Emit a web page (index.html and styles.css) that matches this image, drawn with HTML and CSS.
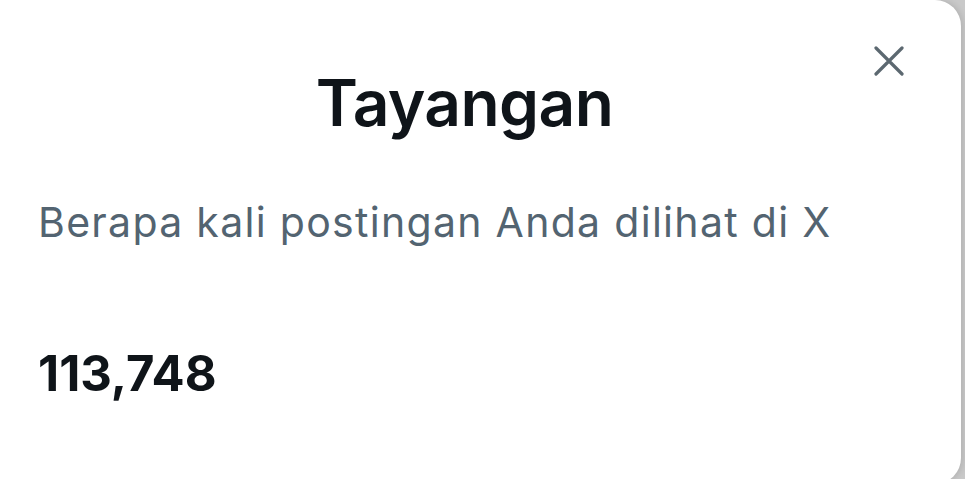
FILE: index.html
```html
<!DOCTYPE html>
<html lang="id">
<head>
<meta charset="utf-8">
<link rel="stylesheet" href="styles.css">
</head>
<body>
<div class="card">
  <div class="header">
    <h1 class="title">Tayangan</h1>
    <button class="close" aria-label="Tutup">
      <svg viewBox="0 0 30 30" width="30" height="30"><path d="M2 2 L28 28 M28 2 L2 28" stroke="#5c6870" stroke-width="3.2" stroke-linecap="round" fill="none"/></svg>
    </button>
  </div>
  <p class="subtitle">Berapa kali postingan Anda dilihat di X</p>
  <p class="count">113,748</p>
</div>
</body>
</html>
```
FILE: styles.css
```css
html, body {
  margin: 0;
  padding: 0;
}
body {
  background: #c9c9c9;
  width: 965px;
  height: 479px;
  overflow: hidden;
  font-family: "Inter", "Liberation Sans", sans-serif;
}
.card {
  position: relative;
  width: 961px;
  height: 484px;
  box-sizing: border-box;
  background: #ffffff;
  border-radius: 0 26px 26px 0;
  box-shadow: 2px 0 6px rgba(0,0,0,0.12);
  padding: 0 38px;
}
.header {
  display: flex;
  justify-content: center;
  padding-top: 64px;
  padding-right: 32px;
}
.title {
  margin: 0;
  font-size: 64px;
  font-weight: 600;
  line-height: 78px;
  color: #0f1419;
  letter-spacing: -0.6px;
}
.close {
  position: absolute;
  top: 46px;
  right: 57px;
  width: 30px;
  height: 30px;
  padding: 0;
  border: 0;
  background: none;
}
.close svg {
  display: block;
}
.subtitle {
  margin: 54px 0 0;
  font-size: 41px;
  line-height: 52px;
  font-weight: 400;
  color: #536471;
  letter-spacing: 1.3px;
}
.count {
  margin: 97px 0 0;
  font-size: 49px;
  line-height: 58px;
  font-weight: 700;
  color: #0f1419;
  letter-spacing: 0;
}
```
